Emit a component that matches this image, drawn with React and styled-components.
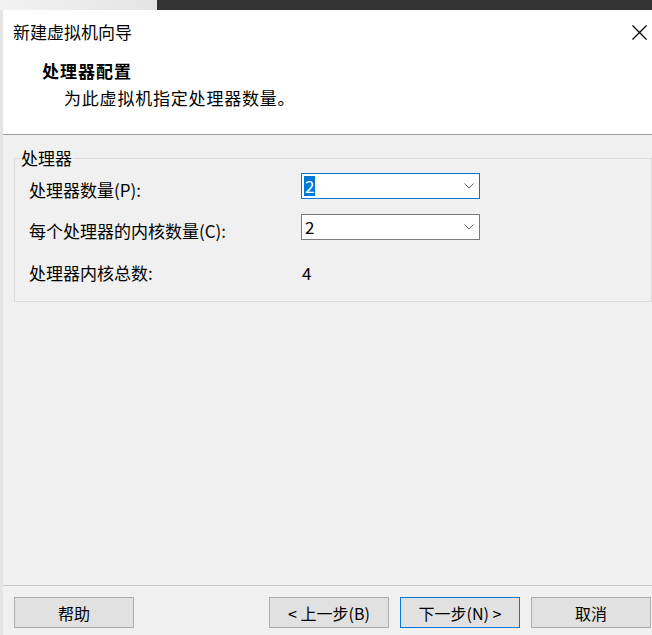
import React from "react";
import styled, { createGlobalStyle } from "styled-components";

const GlobalStyle = createGlobalStyle`
  html, body {
    margin: 0;
    padding: 0;
    background: #f0f0f0;
  }
  body {
    font-family: "Noto Sans CJK SC", "Noto Sans", sans-serif;
    color: #000;
  }
`;

const Page = styled.div`
  width: 652px;
  height: 635px;
  overflow: hidden;
  display: flex;
  flex-direction: column;
  background: #f0f0f0;
`;

const TopStrip = styled.div`
  height: 10px;
  display: flex;
  flex-shrink: 0;
`;

const StripPart = styled.div`
  width: ${(props) => props.width || "auto"};
  flex: ${(props) => (props.width ? "none" : 1)};
  background: ${(props) => props.color};
`;

const Dialog = styled.div`
  flex: 1;
  display: flex;
  flex-direction: column;
  border-left: 3px solid #e4e4e4;
  min-height: 0;
`;

const Header = styled.header`
  height: 125px;
  box-sizing: border-box;
  background: #fff;
  border-bottom: 1px solid #a0a0a0;
  flex-shrink: 0;
`;

const TitleBar = styled.div`
  height: 44px;
  display: flex;
  align-items: center;
  justify-content: space-between;
  padding: 0 5px 0 10px;
`;

const Title = styled.div`
  font-size: 17px;
  line-height: 24px;
`;

const CloseButton = styled.div`
  width: 15px;
  height: 15px;
  display: flex;
  svg {
    display: block;
  }
`;

const Heading = styled.div`
  margin: 5px 0 0 39px;
  font-size: 17px;
  font-weight: 700;
  line-height: 24px;
  letter-spacing: 1px;
`;

const SubHeading = styled.div`
  margin: 3px 0 0 61px;
  font-size: 17px;
  line-height: 24px;
  letter-spacing: 0.8px;
`;

const Body = styled.main`
  flex: 1;
  background: #f0f0f0;
  padding: 13px 0 0 11px;
`;

const Group = styled.fieldset`
  width: 638px;
  box-sizing: border-box;
  margin: 0;
  padding: 5px 0 16px 0;
  border: 1px solid #dcdcdc;
  min-inline-size: 0;

  legend {
    margin-left: 5px;
    padding: 0 1px;
    font-size: 17px;
    line-height: 20px;
  }
`;

const Rows = styled.div`
  display: flex;
  flex-direction: column;
  gap: 15px;
  padding-left: 14px;
`;

const Row = styled.div`
  display: flex;
  align-items: flex-start;
  height: ${(props) => props.height || "26px"};
`;

const Label = styled.div`
  width: 272px;
  font-size: 17px;
  line-height: 26px;
  padding-top: ${(props) => props.offset || "4px"};
`;

const Value = styled.div`
  font-size: 17px;
  line-height: 26px;
  padding: ${(props) => props.offset || "4px"} 0 0 1px;
`;

const Combo = styled.div`
  width: 179px;
  height: 26px;
  box-sizing: border-box;
  background: #fff;
  border: 1px solid ${(props) => (props.focused ? "#0078d7" : "#7a7a7a")};
  display: flex;
  align-items: center;
  justify-content: space-between;
  padding: 0 5px 0 2px;
  font-size: 17px;
`;

const ComboText = styled.span`
  line-height: 20px;
  padding: 0 1px;
  background: ${(props) => (props.selected ? "#0078d7" : "transparent")};
  color: ${(props) => (props.selected ? "#fff" : "#000")};
`;

const Footer = styled.footer`
  height: 50px;
  box-sizing: border-box;
  flex-shrink: 0;
  border-top: 1px solid #c8c8c8;
  display: flex;
  align-items: flex-start;
  padding: 11px 1px 0 11px;
  gap: 11px;
`;

const Button = styled.button`
  width: 120px;
  height: 31px;
  box-sizing: border-box;
  background: #e1e1e1;
  border: 1px solid ${(props) => (props.primary ? "#0078d7" : "#adadad")};
  font-family: "Noto Sans CJK SC", "Noto Sans", sans-serif;
  font-size: 16px;
  color: #000;
  padding: 0;
  margin-left: ${(props) => (props.push ? "auto" : "0")};
  flex-shrink: 0;
`;

const Chevron = () => (
  <svg width="10" height="6" viewBox="0 0 10 6">
    <polyline points="0.5,0.5 5,5 9.5,0.5" fill="none" stroke="#606060" strokeWidth="1" />
  </svg>
);

const CloseIcon = () => (
  <svg width="15" height="15" viewBox="0 0 15 15">
    <path d="M0.5 0.5 L14.5 14.5 M14.5 0.5 L0.5 14.5" stroke="#000" strokeWidth="1.3" />
  </svg>
);

export default function App() {
  return (
    <Page>
      <GlobalStyle />
      <TopStrip>
        <StripPart width="157px" color="linear-gradient(90deg, #f2f2f2, #e4e4e4)" />
        <StripPart color="#333333" />
      </TopStrip>
      <Dialog>
        <Header>
          <TitleBar>
            <Title>新建虚拟机向导</Title>
            <CloseButton>
              <CloseIcon />
            </CloseButton>
          </TitleBar>
          <Heading>处理器配置</Heading>
          <SubHeading>为此虚拟机指定处理器数量。</SubHeading>
        </Header>
        <Body>
          <Group>
            <legend>处理器</legend>
            <Rows>
              <Row>
                <Label>处理器数量(P):</Label>
                <Combo focused>
                  <ComboText selected>2</ComboText>
                  <Chevron />
                </Combo>
              </Row>
              <Row>
                <Label>每个处理器的内核数量(C):</Label>
                <Combo>
                  <ComboText>2</ComboText>
                  <Chevron />
                </Combo>
              </Row>
              <Row height="30px">
                <Label offset="5px">处理器内核总数:</Label>
                <Value offset="5px">4</Value>
              </Row>
            </Rows>
          </Group>
        </Body>
        <Footer>
          <Button>帮助</Button>
          <Button push>&lt; 上一步(B)</Button>
          <Button primary>下一步(N) &gt;</Button>
          <Button>取消</Button>
        </Footer>
      </Dialog>
    </Page>
  );
}
